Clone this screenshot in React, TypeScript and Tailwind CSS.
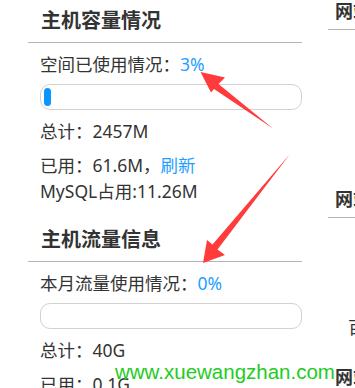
const font = 'font-["Noto_Sans","Noto_Sans_CJK_SC",sans-serif]';

function Bar({ percent }: { percent: number }) {
    return (
        <div className="mt-[7px] h-[26px] w-full rounded-[10px] border border-[#d2d2d2] p-[3px]">
            {percent > 0 && (
                <div className="h-full w-[7px] rounded-full bg-[#0a95ff]" />
            )}
        </div>
    );
}

function Section({
    title,
    label,
    percent,
    children,
    className = '',
}: {
    title: string;
    label: string;
    percent: number;
    children: React.ReactNode;
    className?: string;
}) {
    return (
        <div className={className}>
            <div className="border-b border-[#b4b4b4] pl-[13px] pt-[7px] pb-[7px]">
                <h2 className="text-[20px] font-bold leading-[28px] text-[#333]">{title}</h2>
            </div>
            <div className="pl-3">
                <p className="mt-2 leading-[26px]">
                    {label}
                    <span className="text-[#1e9fff]">{percent}%</span>
                </p>
                <Bar percent={percent} />
                {children}
            </div>
        </div>
    );
}

export default function App() {
    return (
        <div className={`relative h-[388px] w-[355px] overflow-hidden bg-white text-[17.5px] text-[#333] ${font}`}>
            <div className="flex">
                {/* left column */}
                <div className="ml-[28px] w-[274px] shrink-0">
                    <Section title="主机容量情况" label="空间已使用情况：" percent={3}>
                        <p className="mt-2 leading-[26px]">总计：2457M</p>
                        <p className="mt-2 leading-[26px]">
                            已用：61.6M，<span className="text-[#1e9fff]">刷新</span>
                        </p>
                        <p className="leading-[26px]">MySQL占用:11.26M</p>
                    </Section>
                    <Section className="mt-[15px]" title="主机流量信息" label="本月流量使用情况：" percent={0}>
                        <p className="mt-2 leading-[26px]">总计：40G</p>
                        <p className="mt-2 leading-[26px]">已用：0.1G</p>
                    </Section>
                </div>

                {/* right column, mostly cut off */}
                <div className="ml-[26px] w-[120px] shrink-0">
                    <div className="border-b border-[#b4b4b4] pl-[7px] pt-0 pb-[7px]">
                        <h2 className="text-[18px] font-bold leading-[22px] text-[#333]">网站信息</h2>
                    </div>
                    <div className="mt-[158px] border-b border-[#b4b4b4] pl-[7px] pb-[7px]">
                        <h2 className="text-[18px] font-bold leading-[22px] text-[#333]">网站统计</h2>
                    </div>
                    <p className="mt-[96px] pl-[20px] leading-[26px]">百度</p>
                    <h2 className="mt-[26px] pl-[7px] text-[18px] font-bold leading-[22px] text-[#333]">网站</h2>
                </div>
            </div>

            {/* red annotation arrows */}
            <svg className="pointer-events-none absolute left-0 top-0" width="355" height="388" viewBox="0 0 355 388">
                <polygon points="200.5,72 225,77.5 218.5,84 273,128.5 214,89 211,92.5" fill="#ff3b3b" />
                <polygon points="203,263 207,240 212.5,244.5 290,154 217.5,249.5 225,255" fill="#ff3b3b" />
            </svg>

            {/* watermark */}
            <span className='absolute left-[115px] top-[360px] font-["Liberation_Sans",Arial,sans-serif] text-[20.5px] leading-[24px] text-[#22cc22]'>
                www.xuewangzhan.com
            </span>
        </div>
    );
}
